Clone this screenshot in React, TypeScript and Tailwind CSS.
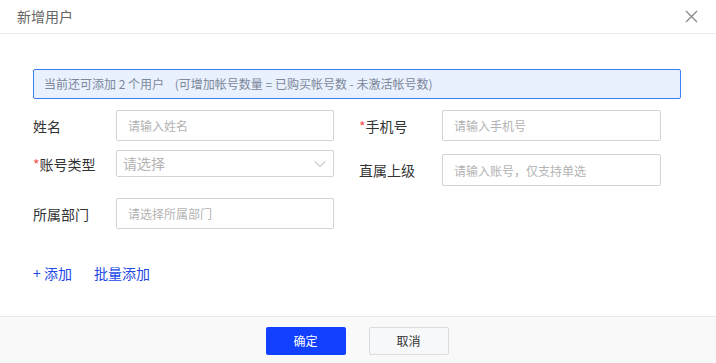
import React from "react";

const font = { fontFamily: '"Noto Sans CJK SC", "Noto Sans", sans-serif' };

const inputCls =
  "w-full h-full border border-[#d4d4d4] rounded-[2px] bg-white px-[11px] text-[12px] text-[#333] placeholder:text-[#b3b3b3] outline-none";

const Label = ({ text, required }: { text: string; required?: boolean }) => (
  <div className="w-[83px] shrink-0 text-[14px] text-[#333] leading-none">
    {required && <span className="text-[#f0524f]">*</span>}
    {text}
  </div>
);

const App = () => {
  return (
    <div
      className="w-[716px] h-[363px] bg-white flex flex-col overflow-hidden"
      style={font}
    >
      <div className="h-[34px] shrink-0 border-b border-[#ececec] flex items-center justify-between pl-[17px] pr-[18px]">
        <span className="text-[14px] text-[#666]">新增用户</span>
        <svg width="13" height="13" viewBox="0 0 13 13" className="text-[#8a8a8a]">
          <path d="M1 1L12 12M12 1L1 12" stroke="currentColor" strokeWidth="1.3" fill="none" />
        </svg>
      </div>

      <div className="flex-1 pl-[33px] pr-[35px]">
        <div className="mt-[35px] h-[30px] border border-[#3d7ff0] bg-[#e9f1fe] rounded-[2px] flex items-center pl-[10px] text-[12px] text-[#7c879a] whitespace-pre">
          当前还可添加 2 个用户    (可增加帐号数量 = 已购买帐号数 - 未激活帐号数)
        </div>

        <div className="flex">
          <div className="w-[301px] flex flex-col">
            <div className="mt-[11px] h-[31px] flex items-center">
              <Label text="姓名" />
              <input className={inputCls} placeholder="请输入姓名" />
            </div>
            <div className="mt-[9px] h-[27px] flex items-center">
              <Label text="账号类型" required />
              <div className="w-full h-full border border-[#d4d4d4] rounded-[2px] flex items-center justify-between pl-[6px] pr-[7px]">
                <span className="text-[14px] text-[#b3b3b3]">请选择</span>
                <svg width="12" height="8" viewBox="0 0 12 8" className="text-[#a6a6a6]">
                  <path d="M1 1.5L6 6.5L11 1.5" stroke="currentColor" strokeWidth="1" fill="none" />
                </svg>
              </div>
            </div>
            <div className="mt-[21px] h-[31px] flex items-center">
              <Label text="所属部门" />
              <input className={inputCls} placeholder="请选择所属部门" />
            </div>
          </div>

          <div className="ml-[25px] w-[302px] flex flex-col">
            <div className="mt-[11px] h-[31px] flex items-center">
              <Label text="手机号" required />
              <input className={inputCls} placeholder="请输入手机号" />
            </div>
            <div className="mt-[13px] h-[32px] flex items-center">
              <Label text="直属上级" />
              <input className={inputCls} placeholder="请输入账号，仅支持单选" />
            </div>
          </div>
        </div>

        <div className="mt-[34px] flex items-center gap-[22px] text-[14px] text-[#2248e6]">
          <span>+ 添加</span>
          <span>批量添加</span>
        </div>
      </div>

      <div className="h-[47px] shrink-0 border-t border-[#e8e8e8] bg-[#f9f9f9] flex justify-center gap-[23px] pt-[10px] pr-[2px]">
        <button className="w-[80px] h-[28px] rounded-[2px] bg-[#1240ff] text-white text-[12px]">
          确定
        </button>
        <button className="w-[80px] h-[28px] rounded-[2px] bg-[#f7f8fa] border border-[#dcdcdc] text-[#333] text-[12px]">
          取消
        </button>
      </div>
    </div>
  );
};

export default App;
